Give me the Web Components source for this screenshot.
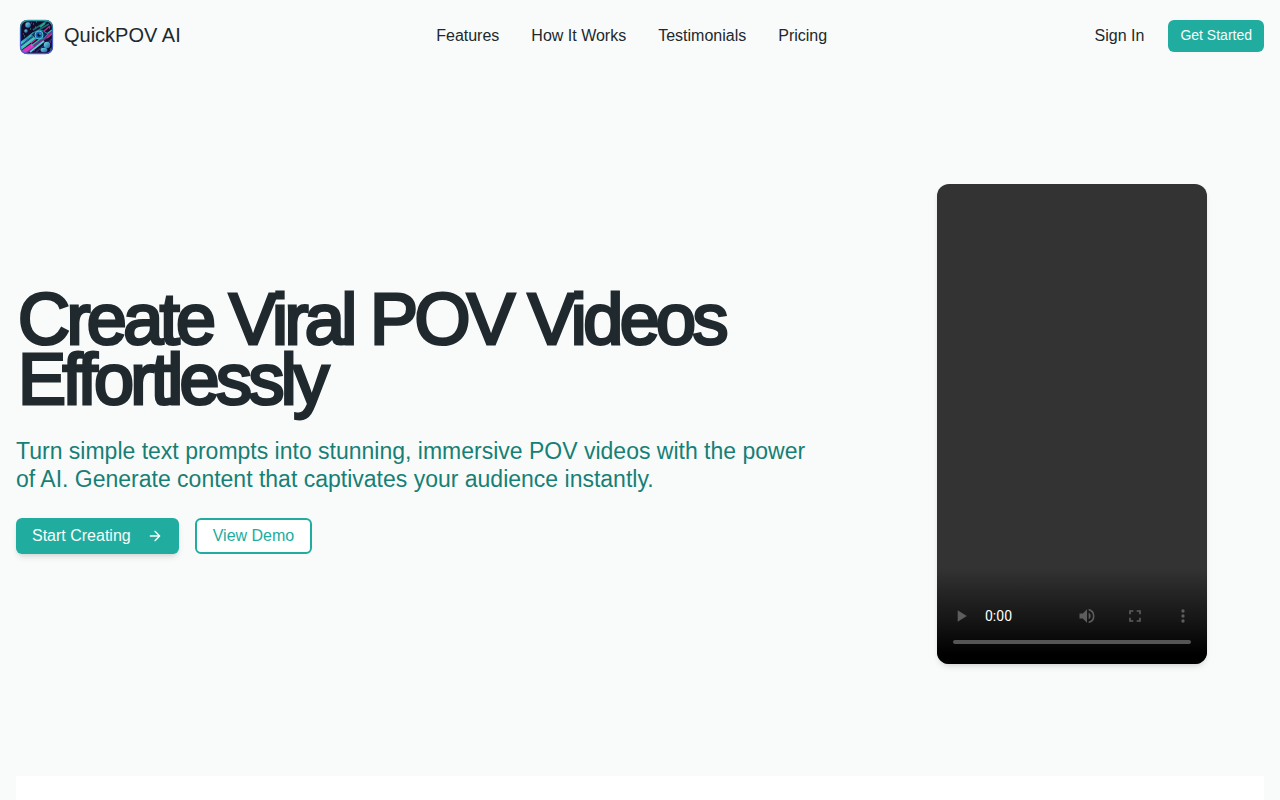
<!DOCTYPE html>
<html lang="en">
<head>
<meta charset="utf-8">
<meta name="viewport" content="width=device-width, initial-scale=1">
<title>QuickPOV AI</title>
<style>
  :root {
    --bg: #f9fbfa;
    --ink: #20292e;
    --brand: #20ada0;
    --brand-deep: #167f76;
  }
  body {
    margin: 0;
    background: var(--bg);
    color: var(--ink);
    font-family: "Liberation Sans", Arial, sans-serif;
    font-size: 16px;
    line-height: 24px;
  }
</style>
</head>
<body>
<pov-page></pov-page>

<template id="pov-page">
  <style>
    :host { display: flex; flex-direction: column; min-height: 100vh; }
    .next { flex: 1; margin: 0 16px; background: #fff; }
  </style>
  <pov-header></pov-header>
  <main><pov-hero></pov-hero></main>
  <section class="next" aria-label="Features"></section>
</template>

<template id="pov-logo">
  <style>
    :host { display: block; width: 40px; height: 40px; }
    svg { display: block; width: 100%; height: 100%; }
  </style>
  <svg viewBox="0 0 40 40" aria-hidden="true">
    <defs>
      <clipPath id="tile"><rect x="4" y="4" width="33" height="34" rx="7"/></clipPath>
      <linearGradient id="edge" x1="0" y1="0" x2="0" y2="1">
        <stop offset="0" stop-color="#2f98a4"/><stop offset=".4" stop-color="#3a62b4"/><stop offset="1" stop-color="#4a58e0"/>
      </linearGradient>
      <linearGradient id="orb" x1="0" y1="0" x2="1" y2="1">
        <stop offset="0" stop-color="#69e5e5"/><stop offset="1" stop-color="#2458a8"/>
      </linearGradient>
      <linearGradient id="beam" x1="1" y1="0" x2="0" y2="1">
        <stop offset="0" stop-color="#3ad0c0"/><stop offset=".5" stop-color="#2a90b8"/><stop offset="1" stop-color="#50d8d8"/>
      </linearGradient>
    </defs>
    <g clip-path="url(#tile)">
      <rect x="4" y="4" width="33" height="34" fill="#150c2c"/>
      <g stroke-linecap="butt" fill="none">
        <path d="M17 14 31 5M21 15 33 8" stroke="#176c70" stroke-width="1.6"/>
        <path d="M24 11l5-4" stroke="#2ba68c" stroke-width="2"/>
        <path d="M28 15l6-5" stroke="#b42c91" stroke-width="1.6"/>
        <path d="M4 28 18 17" stroke="url(#beam)" stroke-width="2.6"/>
        <path d="M4 33 21 20" stroke="#43c7bd" stroke-width="3"/>
        <path d="M4 30 18 20" stroke="#265b97" stroke-width="1.2"/>
        <path d="M9 37 38 15" stroke="#71328f" stroke-width="3"/>
        <path d="M4 38 17 29" stroke="#d936c4" stroke-width="4"/>
        <path d="M15 30 36 14" stroke="#32b9b5" stroke-width="1.4"/>
        <path d="M14 36 28 25" stroke="#55ced5" stroke-width="1.8"/>
        <path d="M20 36 36 23" stroke="#2c3778" stroke-width="1.4"/>
        <path d="M15 27l5-4M31 22l6-5" stroke="#d22c91" stroke-width="1.4"/>
      </g>
      <path d="M15 19q8-9 17-1-7 10-17 1z" fill="#132a59" stroke="#2795a7"/>
      <circle cx="23" cy="19" r="4" fill="#2464b8" stroke="#4ac6cf"/>
      <circle cx="23" cy="19" r="1.8" fill="#081638"/>
      <circle cx="24" cy="18" r=".7" fill="#8cecec"/>
      <circle cx="12" cy="9" r="2.7" fill="url(#orb)"/>
      <circle cx="10" cy="15" r="1.7" fill="url(#orb)"/>
      <circle cx="31" cy="29" r="3.2" fill="url(#orb)"/>
      <ellipse cx="28" cy="34" rx="3.4" ry="2.2" fill="url(#orb)"/>
      <path d="M17 8h1M20 6h1M14 13h1M8 20h1M34 7h1M34 33h1M19 11h1M33 12h1" stroke="#24a399"/>
      <path d="M15 7h1M7 18h1M18 34h1M34 26h1" stroke="#a937b1"/>
    </g>
    <rect x="4.500" y="4.500" width="32" height="33" rx="7" fill="none" stroke="url(#edge)" stroke-width="1.3"/>
  </svg>
</template>

<template id="pov-header">
  <style>
    :host { display: block; }
    header { display: flex; align-items: center; justify-content: space-between; padding: 16px; }
    a { color: inherit; text-decoration: none; }
    .brand { display: flex; align-items: center; gap: 8px; font-size: 20px; line-height: 28px; }
    .brand span { padding-bottom: 2px; }
    nav { display: flex; gap: 32px; }
    .account { display: flex; align-items: center; gap: 16px; }
    .sign { padding: 0 8px 0 12px; }
  </style>
  <header>
    <a class="brand" href="#"><pov-logo></pov-logo><span>QuickPOV AI</span></a>
    <nav aria-label="Main">
      <a href="#features">Features</a>
      <a href="#how">How It Works</a>
      <a href="#testimonials">Testimonials</a>
      <a href="#pricing">Pricing</a>
    </nav>
    <div class="account">
      <a class="sign" href="#signin">Sign In</a>
      <pov-button size="small">Get Started</pov-button>
    </div>
  </header>
</template>

<template id="pov-button">
  <style>
    :host { display: block; }
    button {
      display: flex; align-items: center; gap: 16px;
      box-sizing: border-box; height: 36px; padding: 0 16px;
      border: 0; border-radius: 6px;
      background: var(--brand); color: #f9fbfa;
      font: inherit; white-space: nowrap; cursor: pointer;
      box-shadow: 0 4px 6px -1px rgb(0 0 0 / .1), 0 2px 4px -2px rgb(0 0 0 / .1);
    }
    :host([size="small"]) button {
      height: 32px; padding: 0 12px 2px; font-size: 14px; box-shadow: none;
    }
    :host([variant="outline"]) button {
      border: 2px solid var(--brand); background: #fff; color: var(--brand); box-shadow: none;
    }
  </style>
  <button type="button"><slot></slot><slot name="icon"></slot></button>
</template>

<template id="pov-hero">
  <style>
    :host { display: block; }
    .hero {
      display: grid; grid-template-columns: 17fr 8fr; gap: 48px;
      align-items: center; padding: 112px 16px;
    }
    h1 {
      margin: 0; padding-left: 2px; font-size: 72px; line-height: 60px; font-weight: 400;
      letter-spacing: -0.05em; -webkit-text-stroke: 3px currentColor;
    }
    .copy { padding-bottom: 5px; }
    p { max-width: 800px; margin: 28px 0 25px; color: var(--brand-deep); font-size: 23px; line-height: 28px; }
    .actions { display: flex; gap: 16px; }
    pov-player { justify-self: center; }
    svg { display: block; width: 16px; height: 16px; }
  </style>
  <section class="hero">
    <div class="copy">
      <h1>Create Viral POV Videos Effortlessly</h1>
      <p>Turn simple text prompts into stunning, immersive POV videos with the power of AI. Generate content that captivates your audience instantly.</p>
      <div class="actions">
        <pov-button>Start Creating
          <svg slot="icon" viewBox="0 0 24 24" fill="none" stroke="currentColor" stroke-width="2" stroke-linecap="round" stroke-linejoin="round" aria-hidden="true"><path d="M5 12h14M12 5l7 7-7 7"/></svg>
        </pov-button>
        <pov-button variant="outline">View Demo</pov-button>
      </div>
    </div>
    <pov-player></pov-player>
  </section>
</template>

<template id="pov-player">
  <style>
    :host {
      display: flex; flex-direction: column; justify-content: flex-end;
      width: 270px; aspect-ratio: 9 / 16; overflow: hidden; border-radius: 12px;
      background: #333;
      box-shadow: 0 4px 6px -1px rgb(0 0 0 / .1), 0 2px 4px -2px rgb(0 0 0 / .1);
    }
    .panel {
      display: flex; flex-direction: column; justify-content: flex-end;
      box-sizing: border-box; height: 96px; padding-bottom: 20px;
      background: linear-gradient(#333, #222 30%, #151515 55%, #000 90%);
    }
    .row { display: flex; align-items: center; height: 48px; }
    .time { flex: 1; color: #fff; font: 14px/20px Roboto, sans-serif; }
    button {
      display: grid; place-items: center; width: 48px; height: 48px;
      padding: 0; border: 0; background: none; color: #5d5d5d;
    }
    svg { width: 20px; height: 20px; fill: currentColor; }
    input {
      appearance: none; height: 4px; margin: 0 16px; border-radius: 2px;
      background: #555;
    }
    input::-webkit-slider-thumb { appearance: none; width: 0; height: 0; }
  </style>
  <div class="panel">
    <div class="row">
      <button type="button" aria-label="Play" disabled><svg viewBox="0 0 24 24"><path d="M8 5v14l11-7z"/></svg></button>
      <span class="time">0:00</span>
      <button type="button" aria-label="Mute" disabled><svg viewBox="0 0 24 24"><path d="M3 9v6h4l5 5V4L7 9H3zm13.5 3A4.500 4.500 0 0 0 14 7.970v8.050A4.470 4.470 0 0 0 16.500 12zM14 3.230v2.060a7 7 0 0 1 0 13.420v2.060a9 9 0 0 0 0-17.540z"/></svg></button>
      <button type="button" aria-label="Full screen" disabled><svg viewBox="0 0 24 24"><path d="M7 14H5v5h5v-2H7v-3zM5 10h2V7h3V5H5v5zm12 7h-3v2h5v-5h-2v3zM14 5v2h3v3h2V5h-5z"/></svg></button>
      <button type="button" aria-label="More options" disabled><svg viewBox="0 0 24 24"><path d="M12 8a2 2 0 1 0 0-4 2 2 0 0 0 0 4zm0 2a2 2 0 1 0 0 4 2 2 0 0 0 0-4zm0 6a2 2 0 1 0 0 4 2 2 0 0 0 0-4z"/></svg></button>
    </div>
    <input type="range" min="0" max="100" value="0" aria-label="Video position" disabled>
  </div>
</template>

<script>
  class PovElement extends HTMLElement {
    constructor() {
      super();
      const template = document.getElementById(this.localName);
      this.attachShadow({ mode: "open" }).append(template.content.cloneNode(true));
    }
  }
  for (const name of ["pov-logo", "pov-button", "pov-player", "pov-header", "pov-hero", "pov-page"]) {
    customElements.define(name, class extends PovElement {});
  }
</script>
</body>
</html>
